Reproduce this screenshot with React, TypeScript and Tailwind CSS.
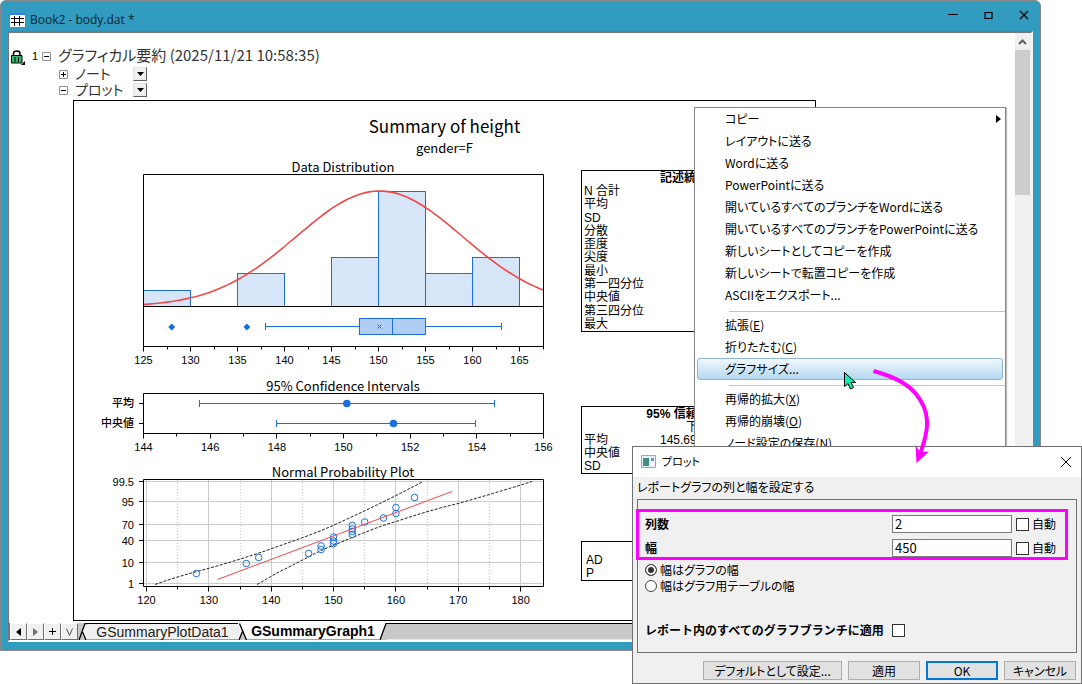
import React from "react";

const AXIS = "#000000";
const BLUE = "#1a6fdc";
const RED = "#f04848";

const range = (from: number, to: number, step: number) => {
  const out: number[] = [];
  for (let v = from; v <= to + 0.001; v += step) out.push(v);
  return out;
};

const toPath = (points: number[][]) =>
  points.map(([x, y], i) => `${i === 0 ? "M" : "L"}${x.toFixed(1)} ${y.toFixed(1)}`).join(" ");

// Bottom axis ticks with labels on the major ones
function XAxis({ y, major, minor, scale }: {
  y: number;
  major: number[];
  minor: number[];
  scale: (v: number) => number;
}) {
  return (
    <g>
      {minor.map((v) => (
        <path key={v} d={`M${Math.floor(scale(v)) + 0.5} ${y}v3`} stroke={AXIS} />
      ))}
      {major.map((v) => (
        <g key={v}>
          <path d={`M${Math.floor(scale(v)) + 0.5} ${y}v5`} stroke={AXIS} />
          <text x={scale(v)} y={y + 17} textAnchor="middle" className="text-[11px]">{v}</text>
        </g>
      ))}
    </g>
  );
}

function ChartTitle({ y, children }: { y: number; children: string }) {
  return (
    <text x={269} y={y} textAnchor="middle" className="text-[13px] font-['Noto_Sans_CJK_JP',sans-serif]">
      {children}
    </text>
  );
}

function DistributionChart() {
  const x = (v: number) => 69.5 + (v - 125) * 9.4;
  const bins = [
    { from: 125, count: 1 },
    { from: 135, count: 2 },
    { from: 145, count: 3 },
    { from: 150, count: 7 },
    { from: 155, count: 2 },
    { from: 160, count: 3 },
  ];
  const curve = range(125, 167.5, 0.5).map((v) => [
    x(v),
    146.5 - 115.5 * Math.exp(-((v - 150.1) ** 2) / (2 * 8.83 ** 2)),
  ]);
  return (
    <svg width="472" height="208" fill="none" className="block overflow-visible font-['Liberation_Sans',sans-serif]">
      <g fill="#000">
        <ChartTitle y={12}>Data Distribution</ChartTitle>
        <XAxis y={186.5} major={range(125, 165, 5)} minor={range(127.5, 167.5, 5)} scale={x} />
      </g>
      {bins.map((b) => {
        const top = Math.round(146 - b.count * 16.4) + 0.5;
        return (
          <rect
            key={b.from}
            x={Math.floor(x(b.from)) + 0.5}
            y={top}
            width={47}
            height={146.5 - top}
            fill="#d6e5f8"
            stroke={BLUE}
          />
        );
      })}
      <path d={toPath(curve)} stroke={RED} strokeWidth="1.6" />
      <path d="M69.5 14.5h400v172h-400zM69.5 146.5h400" stroke={AXIS} />
      {/* box plot */}
      <path d="M191.5 166.5H285M351 166.5H427.5M191.5 163v7M427.5 163v7" stroke={BLUE} />
      <rect x="285.5" y="158.5" width="66" height="16" fill="#b0cdf4" stroke={BLUE} />
      <path d="M318.5 158.5v16" stroke={BLUE} />
      <path d="M303.5 164.5l4 4M307.5 164.5l-4 4" stroke={BLUE} />
      {[128, 136].map((v) => (
        <path key={v} d={`M${x(v)} 163.5l3.5 3.5l-3.5 3.5l-3.5 -3.5z`} fill={BLUE} />
      ))}
    </svg>
  );
}

function IntervalsChart() {
  const x = (v: number) => 69.5 + ((v - 144) * 400) / 12;
  const rows = [
    { label: "平均", y: 27.5, low: 145.69, high: 154.52, mid: 150.1 },
    { label: "中央値", y: 47.5, low: 148, high: 153.97, mid: 151.5 },
  ];
  return (
    <svg width="472" height="80" fill="none" className="block overflow-visible font-['Liberation_Sans',sans-serif]">
      <g fill="#000">
        <ChartTitle y={15}>95% Confidence Intervals</ChartTitle>
        <XAxis y={57.5} major={range(144, 156, 2)} minor={range(145, 155, 2)} scale={x} />
      </g>
      <path d="M69.5 17.5h400v40h-400z" stroke={AXIS} />
      {rows.map((r) => {
        const low = Math.floor(x(r.low)) + 0.5;
        const high = Math.floor(x(r.high)) + 0.5;
        return (
          <g key={r.label}>
            <path d={`M65 ${r.y}h5`} stroke={AXIS} />
            <text x={60} y={r.y + 3.5} fill="#000" textAnchor="end" className="text-[11px] font-medium font-['Liberation_Sans','Noto_Sans_CJK_JP',sans-serif]">
              {r.label}
            </text>
            <path d={`M${low} ${r.y}H${high}M${low} ${r.y - 3.5}v7M${high} ${r.y - 3.5}v7`} stroke={BLUE} />
            <circle cx={x(r.mid)} cy={r.y} r="3.8" fill={BLUE} />
          </g>
        );
      })}
    </svg>
  );
}

function ProbabilityChart() {
  const x = (v: number) => 72.5 + (v - 120) * 6.235;
  const levels: [string, number][] = [
    ["99.5", 17.5], ["95", 37.5], ["70", 60.5], ["40", 76.5], ["10", 98.5], ["1", 119.5],
  ];
  const points = [
    [128, 109.5], [136, 99.5], [138, 93.5], [146, 89.5], [148, 85.5], [148, 82],
    [150, 79.5], [150, 77], [150, 73], [153, 70.5], [153, 67.5], [153, 65], [153, 61.5],
    [155, 58], [158, 54], [160, 49.5], [160, 43.5], [163, 33.5],
  ];
  return (
    <svg width="472" height="144" fill="none" className="block overflow-visible font-['Liberation_Sans',sans-serif]">
      <g fill="#000">
        <ChartTitle y={13}>Normal Probability Plot</ChartTitle>
      </g>
      {range(120, 180, 10).map((v) => (
        <path key={v} d={`M${Math.floor(x(v)) + 0.5} 16v106`} stroke="#cccccc" />
      ))}
      {range(125, 175, 10).map((v) => (
        <path key={v} d={`M${Math.floor(x(v)) + 0.5} 16v106`} stroke="#c8c8c8" strokeDasharray="1 2" />
      ))}
      {levels.map(([label, y]) => (
        <g key={label}>
          <path d={`M70 ${y}h399`} stroke="#cccccc" />
          <path d={`M65 ${y}h5`} stroke={AXIS} />
          <text x={60} y={y + 4} fill="#000" textAnchor="end" className="text-[11px]">{label}</text>
        </g>
      ))}
      <path d="M81 120.5C99 114 117 109 136 104C157 98 177 92 198 84.5C219 77 240 70 259 61.5C290 47.5 320 33 349 17.5" stroke="#222" strokeDasharray="3 1.5" />
      <path d="M183 120.5C193 115 202 109 213 104C224 98.5 236 92 246 87C257 82 268 78 278 73.5C292 68 306 62 322 57.5C343 50.5 363 44.5 384 39.5C409 32.5 434 25 458 17.5" stroke="#222" strokeDasharray="3 1.5" />
      {points.map(([v, y], i) => (
        <circle key={i} cx={x(v)} cy={y} r="3.3" stroke={BLUE} />
      ))}
      <path d="M143.5 115.5L378 27.5" stroke={RED} />
      <path d="M69.5 15.5h400v107h-400z" stroke={AXIS} />
      <g fill="#000">
        <XAxis y={122.5} major={range(120, 180, 10)} minor={range(125, 175, 10)} scale={x} />
      </g>
    </svg>
  );
}

function StatsTables() {
  const stats = ["N 合計", "平均", "SD", "分散", "歪度", "尖度", "最小", "第一四分位", "中央値", "第三四分位", "最大"];
  return (
    <div className="mr-7 flex-1 pt-[10px] text-[12px] leading-[13px] font-['Liberation_Sans','Noto_Sans_CJK_JP',sans-serif]">
      <table className="h-[162px] w-full border-separate border-spacing-0 border border-black">
        <thead>
          <tr><th className="p-0 pt-px text-center">記述統計</th></tr>
        </thead>
        <tbody>
          {stats.map((s) => (
            <tr key={s}><td className="p-0 pl-[2px]">{s}</td></tr>
          ))}
        </tbody>
      </table>
      <table className="mt-[74px] h-[68px] w-full table-fixed border-separate border-spacing-0 border border-black">
        <colgroup>
          <col className="w-[76px]" />
          <col className="w-[52px]" />
          <col />
        </colgroup>
        <thead>
          <tr><th colSpan={3} className="p-0 pt-px text-center">95% 信頼区間</th></tr>
          <tr>
            <th className="p-0"></th>
            <th className="p-0 text-right font-normal">下側</th>
            <th className="p-0"></th>
          </tr>
        </thead>
        <tbody>
          <tr>
            <td className="p-0 pl-[2px]">平均</td>
            <td className="p-0 pl-[2px]">145.693</td>
            <td className="p-0"></td>
          </tr>
          <tr><td className="p-0 pl-[2px]">中央値</td></tr>
          <tr><td className="p-0 pl-[2px]">SD</td></tr>
        </tbody>
      </table>
      <table className="mt-[67px] w-full border-separate border-spacing-0 border border-black">
        <tbody>
          <tr><td className="h-[12px] p-0"></td></tr>
          <tr><td className="p-0 pl-1">AD</td></tr>
          <tr><td className="p-0 pl-1">P</td></tr>
        </tbody>
      </table>
    </div>
  );
}

function TreeToggle({ open }: { open: boolean }) {
  return (
    <button type="button" aria-label="toggle" className="size-[9px] shrink-0 bg-white">
      <svg width="9" height="9" fill="none" className="block">
        <path d="M.5.5h8v8h-8z" stroke="#909090" />
        <path d={open ? "M2 4.5h5" : "M2 4.5h5M4.5 2v5"} stroke="#000" />
      </svg>
    </button>
  );
}

function TreeRow({ label, open }: { label: string; open: boolean }) {
  return (
    <div className="flex h-4 items-center pl-[50px]">
      <TreeToggle open={open} />
      <span className="ml-[7px] w-[58px] text-[14px] leading-4 text-[#333] font-['Liberation_Sans','Noto_Sans_CJK_JP',sans-serif]">{label}</span>
      <button type="button" aria-label={label} className="flex size-[14px] items-center justify-center border border-t-[#e4e4e4] border-l-[#e4e4e4] border-r-[#606060] border-b-[#606060] bg-[#f0f0f0]">
        <svg width="7" height="4"><path d="M0 0h7L3.5 4z" /></svg>
      </button>
    </div>
  );
}

function SheetTabs() {
  const nav = "flex h-[17px] w-[17px] items-center justify-center border border-t-white border-l-white border-r-[#707070] border-b-[#707070] bg-[#f0f0f0]";
  return (
    <div className="flex h-[17px] shrink-0 bg-[#c8c8c8] text-[14px] leading-[16px] font-['Liberation_Sans',sans-serif]">
      <div className="flex border-l border-[#707070]">
        <button type="button" aria-label="first" className={nav}>
          <svg width="5" height="8"><path d="M5 0v8L0 4z" /></svg>
        </button>
        <button type="button" aria-label="next" className={nav}>
          <svg width="5" height="8"><path d="M0 0v8l5-4z" fill="#707070" /></svg>
        </button>
        <button type="button" aria-label="add" className={nav}>
          <svg width="7" height="7"><path d="M0 3.5h7M3.5 0v7" stroke="#000" /></svg>
        </button>
        <button type="button" aria-label="list" className={nav}>
          <svg width="7" height="8" fill="none"><path d="M.5.5l3 7l3-7" stroke="#555" /></svg>
        </button>
      </div>
      <svg width="9" height="17" fill="none" className="shrink-0">
        <path d="M7 0h2v17H8L4 9z" fill="#f0f0f0" />
        <path d="M1 17L7 .5h2" stroke="#000" strokeWidth="1.3" />
        <path d="M4.5 9L8 17" stroke="#000" strokeWidth="1.3" />
      </svg>
      <button type="button" className="w-[151px] border-t border-b border-t-black border-b-[#a0a0a0] bg-[#f0f0f0] text-[#222]">
        GSummaryPlotData1
      </button>
      <svg width="9" height="17" fill="none" className="shrink-0">
        <path d="M0 0h2l2 8L1 17H0z" fill="#f0f0f0" />
        <path d="M2 0h7v17z" fill="#fff" />
        <path d="M1.5 .5L8.5 17M1 17l3.5-8.5" stroke="#000" strokeWidth="1.3" />
      </svg>
      <button type="button" className="w-[132px] border-b border-[#a0a0a0] bg-white font-bold">
        GSummaryGraph1
      </button>
      <svg width="8" height="17" fill="none" className="shrink-0">
        <path d="M0 0h7L1 17H0z" fill="#fff" />
        <path d="M1 17L7 .5h1" stroke="#000" strokeWidth="1.3" />
      </svg>
      <div className="flex-1 border-t border-b border-t-black border-b-[#e8e8e8]"></div>
    </div>
  );
}

function BookWindow() {
  return (
    <section className="flex h-[calc(100%-33px)] w-[calc(100%-41px)] flex-col rounded-t-md border border-[#8a8a8a] bg-[#319bc0] px-[7px] pb-[8px]">
      <header className="flex h-[30px] shrink-0 items-center pt-[8px] pl-[2px] font-['Open_Sans',sans-serif]">
        <svg width="15" height="15">
          <path d="M0 0h15v14H0z" fill="#fff" />
          <path d="M0 0h15v2H0z" fill="#2f7fe0" />
          <path d="M1 5.5h13M1 9.5h13M4.5 3v10M9.5 3v10" stroke="#000" />
        </svg>
        <h1 className="ml-[5px] flex-1 text-[12px] text-[#0b2530]">Book2 - body.dat *</h1>
        <div className="mb-[10px] flex items-center gap-[26px] pr-1">
          <button type="button" aria-label="minimize">
            <svg width="10" height="10" fill="none"><path d="M0 4.5h10" stroke="#000" /></svg>
          </button>
          <button type="button" aria-label="maximize">
            <svg width="9" height="9" fill="none"><path d="M1 1.5h7v6H1z" stroke="#000" strokeWidth="1.2" /></svg>
          </button>
          <button type="button" aria-label="close">
            <svg width="10" height="10" fill="none"><path d="M1 1l8 8M9 1L1 9" stroke="#000" strokeWidth="1.3" /></svg>
          </button>
        </div>
      </header>
      <div className="flex min-h-0 flex-1 flex-col border-t-2 border-r-2 border-b-2 border-l border-t-[#777] border-r-[#f4f4f4] border-b-white border-l-[#777] bg-white">
        <div className="flex min-h-0 flex-1">
          <main className="min-w-0 flex-1 pt-[13px]">
            <div className="flex h-5 items-center">
              <svg width="17" height="17" className="shrink-0">
                <path d="M4.5 8V5.5Q4.5 3 8 3Q11 3 11 5.5V8" fill="none" stroke="#000" strokeWidth="1.5" />
                <path d="M2.5 7.5h10.5v7.5H2.5z" fill="#33b56a" stroke="#000" />
                <path d="M6 9v5M9.5 9v5" stroke="#000" />
                <path d="M16 13v4h-4z" />
              </svg>
              <span className="w-4 pl-[6px] text-[11px] font-['Liberation_Sans',sans-serif]">1</span>
              <TreeToggle open />
              <h2 className="ml-[7px] pb-[2px] text-[15px] leading-4 text-[#333]">グラフィカル要約 (2025/11/21 10:58:35)</h2>
            </div>
            <TreeRow label="ノート" open={false} />
            <TreeRow label="プロット" open />
            <article className="mt-[2px] ml-16 w-[743px] border border-black pt-3 pb-3">
              <h3 className="text-center text-[17px] leading-[26px]">Summary of height</h3>
              <p className="text-center text-[13px] leading-[18px]">gender=F</p>
              <div className="mt-[3px] flex gap-[35px]">
                <div className="flex flex-col gap-2">
                  <DistributionChart />
                  <IntervalsChart />
                  <ProbabilityChart />
                </div>
                <StatsTables />
              </div>
            </article>
          </main>
          <div className="w-4 bg-[#f0f0f0] pr-px">
            <div className="flex h-[17px] items-center justify-center">
              <svg width="9" height="6" fill="none"><path d="M1 5l3.5-3.5L8 5" stroke="#606060" strokeWidth="2" /></svg>
            </div>
            <div className="h-[145px] bg-[#cdcdcd]"></div>
          </div>
        </div>
        <SheetTabs />
      </div>
    </section>
  );
}

function ContextMenu() {
  const items = [
    { label: "コピー", submenu: true },
    { label: "レイアウトに送る" },
    { label: "Wordに送る" },
    { label: "PowerPointに送る" },
    { label: "開いているすべてのブランチをWordに送る" },
    { label: "開いているすべてのブランチをPowerPointに送る" },
    { label: "新しいシートとしてコピーを作成" },
    { label: "新しいシートで転置コピーを作成" },
    { label: "ASCIIをエクスポート..." },
    { separator: true },
    { label: "拡張", hotkey: "E" },
    { label: "折りたたむ", hotkey: "C" },
    { label: "グラフサイズ...", active: true },
    { separator: true },
    { label: "再帰的拡大", hotkey: "X" },
    { label: "再帰的崩壊", hotkey: "O" },
    { label: "ノード設定の保存", hotkey: "N" },
  ];
  return (
    <div role="menu" className="absolute top-[107px] left-[694px] w-[312px] border border-[#888] bg-white px-[2px] text-[12px] shadow-[1px_1px_1px_#bbb]">
      {items.map((item, i) =>
        item.separator ? (
          <div key={i} className="-mr-[2px] ml-8 h-2 pt-[5px]">
            <div className="h-px bg-[#c4c4c4]"></div>
          </div>
        ) : (
          <button
            key={i}
            type="button"
            role="menuitem"
            className={`flex h-[22px] w-full items-center rounded-[3px] border pl-[27px] text-left leading-5 ${item.active ? "border-[#8db4d2] bg-linear-to-b from-[#f2f8fd] to-[#b4d8f2]" : "border-transparent"}`}
          >
            <span className="flex-1">
              {item.label}
              {item.hotkey && <>(<u>{item.hotkey}</u>)</>}
            </span>
            {item.submenu && <svg width="5" height="8" className="mr-px"><path d="M0 0v8l5-4z" /></svg>}
          </button>
        )
      )}
    </div>
  );
}

function SizeRow({ id, label, value }: { id: string; label: string; value: string }) {
  return (
    <div className="flex h-[18px] items-center">
      <label htmlFor={id} className="flex-1 font-bold">{label}</label>
      <input id={id} defaultValue={value} className="h-[18px] w-[120px] border border-[#7a7a7a] bg-white px-[2px] text-[13px]" />
      <label className="flex w-[53px] items-center gap-[3px] pl-1">
        <input type="checkbox" className="size-[13px] shrink-0 appearance-none border border-[#333] bg-white" />
        自動
      </label>
    </div>
  );
}

function WidthOption({ label, checked }: { label: string; checked?: boolean }) {
  return (
    <label className="flex h-4 items-center gap-[3px]">
      <input
        type="radio"
        name="width-mode"
        defaultChecked={checked}
        className="size-3 appearance-none rounded-full border border-[#444] bg-white checked:bg-[#333] checked:shadow-[inset_0_0_0_2px_white]"
      />
      {label}
    </label>
  );
}

function PlotDialog() {
  const button = "h-[19px] border border-[#adadad] bg-[#e1e1e1] leading-[17px]";
  return (
    <section role="dialog" aria-label="プロット" className="absolute right-0 bottom-0 w-[450px] border border-[#707070] bg-[#f0f0f0] text-[12px]">
      <header className="flex h-[30px] items-center bg-white pr-[10px] pb-px pl-2">
        <svg width="15" height="13">
          <path d="M.5.5h14v12H.5z" fill="#e8eef2" stroke="#a0a8b0" />
          <path d="M2 3h6v8H2z" fill="#3f8f86" />
          <path d="M10 3h3v3h-3z" fill="#5b9bd0" />
          <path d="M10 7h3v4h-3z" fill="#fff" />
        </svg>
        <h2 className="ml-[6px] flex-1 text-[11px]">プロット</h2>
        <button type="button" aria-label="close">
          <svg width="10" height="10" fill="none"><path d="M0 0l10 10M10 0L0 10" stroke="#000" /></svg>
        </button>
      </header>
      <div className="px-1 pb-[3px]">
        <p className="h-[22px] leading-[20px]">レポートグラフの列と幅を設定する</p>
        <div className="h-[154px] border border-[#707070] pt-[9px]">
          <div className="mr-2 -ml-[2px] flex flex-col gap-[6px] border-3 border-[#ff00ff] pt-[3px] pl-[6px]">
            <SizeRow id="columns" label="列数" value="2" />
            <SizeRow id="width" label="幅" value="450" />
          </div>
          <div className="mt-[2px] pl-[7px]">
            <WidthOption label="幅はグラフの幅" checked />
            <WidthOption label="幅はグラフ用テーブルの幅" />
          </div>
          <label className="mt-7 flex h-4 items-center pl-[7px] font-bold [font-feature-settings:normal]">
            <span className="w-[247px]">レポート内のすべてのグラフブランチに適用</span>
            <input type="checkbox" className="size-[13px] appearance-none border border-[#333] bg-white" />
          </label>
        </div>
        <div className="mt-2 mr-px flex justify-end gap-[6px]">
          <button type="button" className={`${button} w-[139px]`}>デフォルトとして設定...</button>
          <button type="button" className={`${button} w-[72px]`}>適用</button>
          <button type="button" className="h-[19px] w-[72px] border-2 border-[#0078d7] bg-[#e1e1e1] leading-[15px]">OK</button>
          <button type="button" className={`${button} w-[72px]`}>キャンセル</button>
        </div>
      </div>
    </section>
  );
}

export default function App() {
  return (
    <div className="relative h-screen overflow-hidden bg-white font-['Noto_Sans_CJK_JP',sans-serif] text-black [font-feature-settings:'palt']">
      <BookWindow />
      <ContextMenu />
      <PlotDialog />
      {/* mouse pointer */}
      <svg width="14" height="20" className="absolute top-[371px] left-[843px]">
        <path d="M1.5 1.5v14l3.5-3l2.5 5.5l3-1.5l-2.5-5h4.5z" fill="#10f0b0" stroke="#000" />
      </svg>
      {/* arrow from the menu item to the dialog */}
      <svg width="64" height="100" fill="none" className="absolute top-[366px] left-[870px]">
        <path d="M3.5 5C22 10 38 18 46 28C60 45 60 62 50 88" stroke="#ff00ff" strokeWidth="4" />
        <path d="M46.5 97L45.5 79L50 86L59 85.5z" fill="#ff00ff" />
      </svg>
    </div>
  );
}
